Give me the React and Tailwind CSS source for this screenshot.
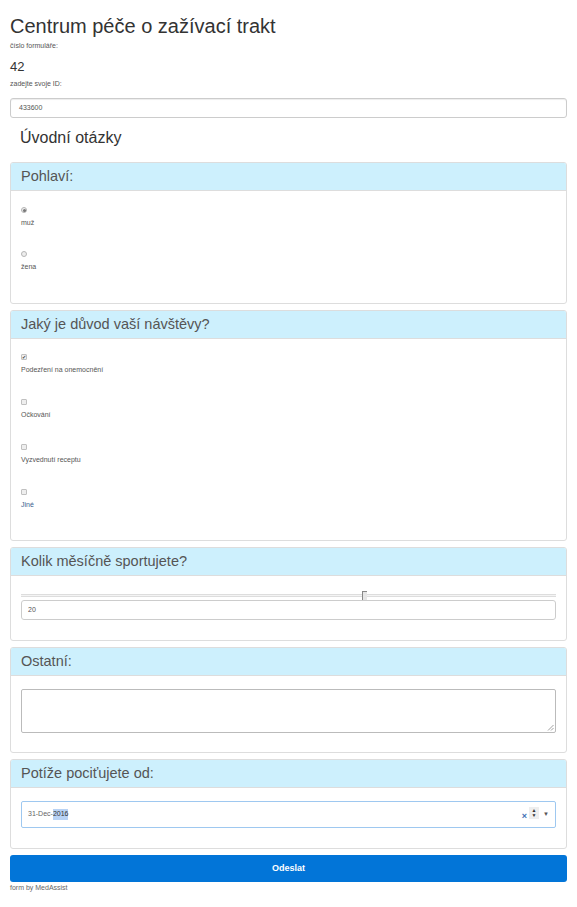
import React from 'react';

const Panel = ({ title, children, bodyClass }) => (
  <div className="border border-[#dddddd] rounded-[3px] bg-white overflow-hidden">
    <div className="h-[28px] bg-[#cdf0fd] border-b border-[#dddddd] px-[10px] flex items-center">
      <h3 className="text-[14.5px] leading-none text-[#555555]">{title}</h3>
    </div>
    <div className={bodyClass}>{children}</div>
  </div>
);

const Radio = ({ checked }) => (
  <span className="w-[6px] h-[6px] rounded-full border border-[#b5b5b5] bg-[#eeeeee] flex items-center justify-center">
    {checked && <span className="w-[3px] h-[3px] rounded-full bg-[#777777]" />}
  </span>
);

const Check = ({ checked }) => (
  <span className="w-[6px] h-[6px] rounded-[1px] border border-[#c0c0c0] bg-[#eeeeee] flex items-center justify-center text-[5px] leading-none text-[#444444]">
    {checked ? '✔' : ''}
  </span>
);

const options = [
  { label: 'Podezření na onemocnění', checked: true },
  { label: 'Očkování', checked: false },
  { label: 'Vyzvednutí receptu', checked: false },
  { label: 'Jiné', checked: false },
];

export default function App() {
  return (
    <div className="min-h-[907px] bg-white px-[10px] pt-[12px] text-[#333333] font-['Liberation_Sans',Arial,sans-serif]">
      <h1 className="text-[20px] leading-[28px] text-[#333333]">Centrum péče o zažívací trakt</h1>
      <div className="text-[7px] leading-[10px] mt-[1px] text-[#555555]">číslo formuláře:</div>
      <div className="text-[13px] leading-[18px] mt-[7px]">42</div>
      <div className="text-[7px] leading-[10px] mt-[3px] text-[#555555]">zadejte svoje ID:</div>
      <div className="mt-[9px] h-[20px] border border-[#cccccc] rounded-[3px] px-[8px] flex items-center text-[7px] text-[#555555] shadow-[inset_0_1px_1px_rgba(0,0,0,0.075)]">
        433600
      </div>
      <h2 className="pl-[10px] text-[16px] leading-[22px] mt-[9px] text-[#333333]">Úvodní otázky</h2>

      <div className="mt-[13px] flex flex-col gap-[6px]">
        <Panel title="Pohlaví:" bodyClass="h-[112px] px-[10px] pt-[16px] flex flex-col gap-[24px]">
          {[['muž', true], ['žena', false]].map(([label, checked]) => (
            <div key={label} className="flex flex-col gap-[6px]">
              <Radio checked={checked} />
              <span className="text-[7px] leading-[8px] text-[#555555]">{label}</span>
            </div>
          ))}
        </Panel>

        <Panel title="Jaký je důvod vaší návštěvy?" bodyClass="h-[201px] px-[10px] pt-[15px] flex flex-col gap-[25px]">
          {options.map((o) => (
            <div key={o.label} className="flex flex-col gap-[6px]">
              <Check checked={o.checked} />
              <span className={`text-[7px] leading-[8px] ${o.label === 'Jiné' ? 'text-[#3a5f8f]' : 'text-[#555555]'}`}>{o.label}</span>
            </div>
          ))}
        </Panel>

        <Panel title="Kolik měsíčně sportujete?" bodyClass="h-[64px] px-[10px] pt-[13px]">
          <div className="relative h-[11px]">
            <div className="absolute left-0 right-0 top-[5px] h-[3px] border-y border-[#dddddd] bg-[#f4f4f4]" />
            <div className="absolute left-[341px] top-[2px] w-[5px] h-[9px] border-l border-t border-[#888888] bg-[#e6e6e6]" />
          </div>
          <div className="h-[20px] border border-[#cccccc] rounded-[3px] px-[6px] flex items-center text-[7px] text-[#555555]">20</div>
        </Panel>

        <Panel title="Ostatní:" bodyClass="h-[76px] px-[10px] pt-[13px]">
          <div className="relative h-[44px] border border-[#bbbbbb] rounded-[2px]">
            <svg className="absolute right-[1px] bottom-[1px]" width="7" height="7" viewBox="0 0 7 7">
              <path d="M6.5 1 L1 6.5 M6.5 4 L4 6.5" stroke="#888888" strokeWidth="0.8" />
            </svg>
          </div>
        </Panel>

        <Panel title="Potíže pociťujete od:" bodyClass="h-[60px] px-[10px] pt-[13px]">
          <div className="h-[27px] border border-[#9ec8f0] rounded-[2px] pl-[6px] pr-[6px] flex items-center text-[7px]">
            <span className="text-[#666666]">31-Dec-</span>
            <span className="bg-[#b8d3f5] text-[#333333]">2016</span>
            <span className="flex-1" />
            <span className="text-[9px] font-bold text-[#3d6fb3] leading-none mt-[3px]">×</span>
            <span className="ml-[2px] w-[10px] h-[12px] bg-[#eeeeee] flex flex-col items-center justify-center text-[5px] leading-[5px] text-[#333333] -mt-[3px]">
              <span>▲</span>
              <span>▼</span>
            </span>
            <span className="ml-[4px] text-[6px] text-[#555555]">▼</span>
          </div>
        </Panel>

        <button className="h-[27px] w-full bg-[#0275d8] rounded-[3px] text-white text-[9px] font-bold">Odeslat</button>
      </div>
      <div className="text-[7px] leading-[10px] mt-[1px] text-[#666666]">form by MedAssist</div>
    </div>
  );
}
